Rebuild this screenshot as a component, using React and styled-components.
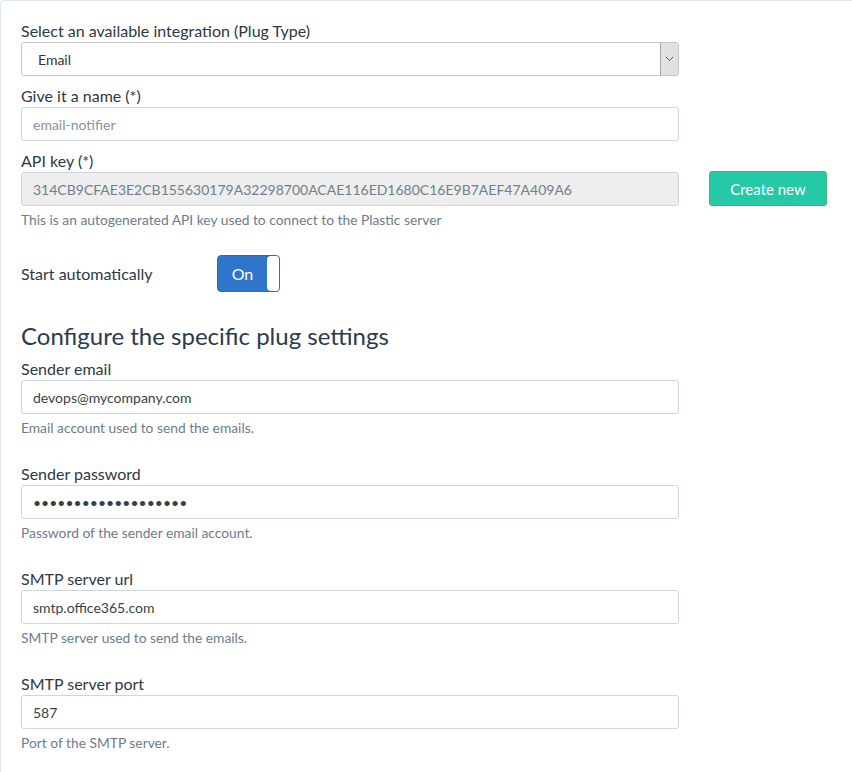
import React from "react";
import styled, { createGlobalStyle } from "styled-components";

const GlobalStyle = createGlobalStyle`
  html, body {
    margin: 0;
    padding: 0;
    background: #ffffff;
    overflow: hidden;
  }
  body {
    font-family: Lato, "Open Sans", "Liberation Sans", sans-serif;
    color: #333d47;
  }
`;

const Panel = styled.div`
  width: 900px;
  min-height: 800px;
  box-sizing: border-box;
  border-top: 1px solid #dde9f2;
  border-left: 1px solid #dde9f2;
  border-top-left-radius: 4px;
  padding: 20px 0 0 20px;
`;

const Row = styled.div`
  display: flex;
  align-items: flex-start;
  gap: 30px;
  margin-top: ${({ $top }) => $top || 0}px;
`;

const Column = styled.div`
  width: 658px;
  display: flex;
  flex-direction: column;
`;

const Field = styled.div`
  display: flex;
  flex-direction: column;
  margin-top: ${({ $top }) => $top || 0}px;
  margin-bottom: ${({ $bottom }) => $bottom || 0}px;
`;

const Label = styled.label`
  font-size: 16px;
  line-height: 20px;
  margin-bottom: 1px;
  color: #2e3844;
`;

const Input = styled.input`
  box-sizing: border-box;
  width: 100%;
  height: 34px;
  padding: 0 11px;
  border: 1px solid #ccd6de;
  border-radius: 3px;
  font-family: inherit;
  font-size: 14px;
  color: #3a3f45;
  background: #ffffff;
  outline: none;
  &:disabled {
    background: #eeeeee;
    color: #6f7f90;
  }
  &::placeholder {
    color: #8593a1;
  }
`;

const SelectBox = styled.div`
  display: flex;
  height: 34px;
  box-sizing: border-box;
  border: 1px solid #c6c6c6;
  border-radius: 3px;
  overflow: hidden;
`;

const Select = styled.select`
  flex: 1;
  appearance: none;
  border: none;
  outline: none;
  background: #fff;
  padding: 0 16px;
  font-family: inherit;
  font-size: 14px;
  color: #333;
`;

const Arrow = styled.div`
  width: 17px;
  background: #e1e1e1;
  border-left: 1px solid #a9a9a9;
  display: flex;
  align-items: center;
  justify-content: center;
`;

const Help = styled.p`
  margin: 4px 0 0;
  font-size: 13.8px;
  line-height: 20px;
  color: #6c7c8d;
`;

const Button = styled.button`
  width: 118px;
  height: 35px;
  margin-top: 20px;
  background: #26c9a6;
  border: 1px solid #40b86a;
  border-radius: 3px;
  color: #fff;
  font-family: inherit;
  font-size: 15px;
  cursor: pointer;
`;

const ToggleRow = styled.div`
  display: flex;
  align-items: center;
  margin-top: 25px;
`;

const ToggleLabel = styled.span`
  width: 196px;
  font-size: 16px;
  line-height: 20px;
  color: #2e3844;
`;

const Toggle = styled.div`
  width: 63px;
  height: 37px;
  box-sizing: border-box;
  display: flex;
  border: 1px solid #2a6dbf;
  border-radius: 4px;
  background: #2f75ca;
  overflow: hidden;
`;

const ToggleText = styled.span`
  flex: 1;
  display: flex;
  align-items: center;
  justify-content: center;
  color: #fff;
  font-size: 16px;
`;

const Knob = styled.span`
  width: 12px;
  background: #fff;
  border-radius: 4px 0 0 4px;
`;

const Heading = styled.h2`
  margin: 28px 0 7px;
  font-size: 24px;
  line-height: 32px;
  font-weight: 400;
  color: #2a3b50;
`;

const settings = [
  { label: "Sender email", value: "devops@mycompany.com", help: "Email account used to send the emails." },
  { label: "Sender password", value: "mypassword12345678!", type: "password", help: "Password of the sender email account." },
  { label: "SMTP server url", value: "smtp.office365.com", help: "SMTP server used to send the emails." },
  { label: "SMTP server port", value: "587", help: "Port of the SMTP server." },
];

export default function App() {
  return (
    <>
      <GlobalStyle />
      <Panel>
        <Column>
          <Field>
            <Label>Select an available integration (Plug Type)</Label>
            <SelectBox>
              <Select defaultValue="email">
                <option value="email">Email</option>
              </Select>
              <Arrow>
                <svg width="9" height="6" viewBox="0 0 9 6">
                  <path d="M1 1l3.5 3.5L8 1" fill="none" stroke="#555" strokeWidth="1" />
                </svg>
              </Arrow>
            </SelectBox>
          </Field>
          <Field $top={10}>
            <Label>Give it a name (*)</Label>
            <Input placeholder="email-notifier" />
          </Field>
        </Column>
        <Row $top={10}>
          <Column>
            <Field>
              <Label>API key (*)</Label>
              <Input disabled value="314CB9CFAE3E2CB155630179A32298700ACAE116ED1680C16E9B7AEF47A409A6" readOnly />
              <Help>This is an autogenerated API key used to connect to the Plastic server</Help>
            </Field>
          </Column>
          <Button>Create new</Button>
        </Row>
        <Column>
          <ToggleRow>
            <ToggleLabel>Start automatically</ToggleLabel>
            <Toggle>
              <ToggleText>On</ToggleText>
              <Knob />
            </Toggle>
          </ToggleRow>
          <Heading>Configure the specific plug settings</Heading>
          {settings.map((s) => (
            <Field key={s.label} $bottom={26}>
              <Label>{s.label}</Label>
              <Input type={s.type || "text"} defaultValue={s.value} />
              <Help>{s.help}</Help>
            </Field>
          ))}
        </Column>
      </Panel>
    </>
  );
}
